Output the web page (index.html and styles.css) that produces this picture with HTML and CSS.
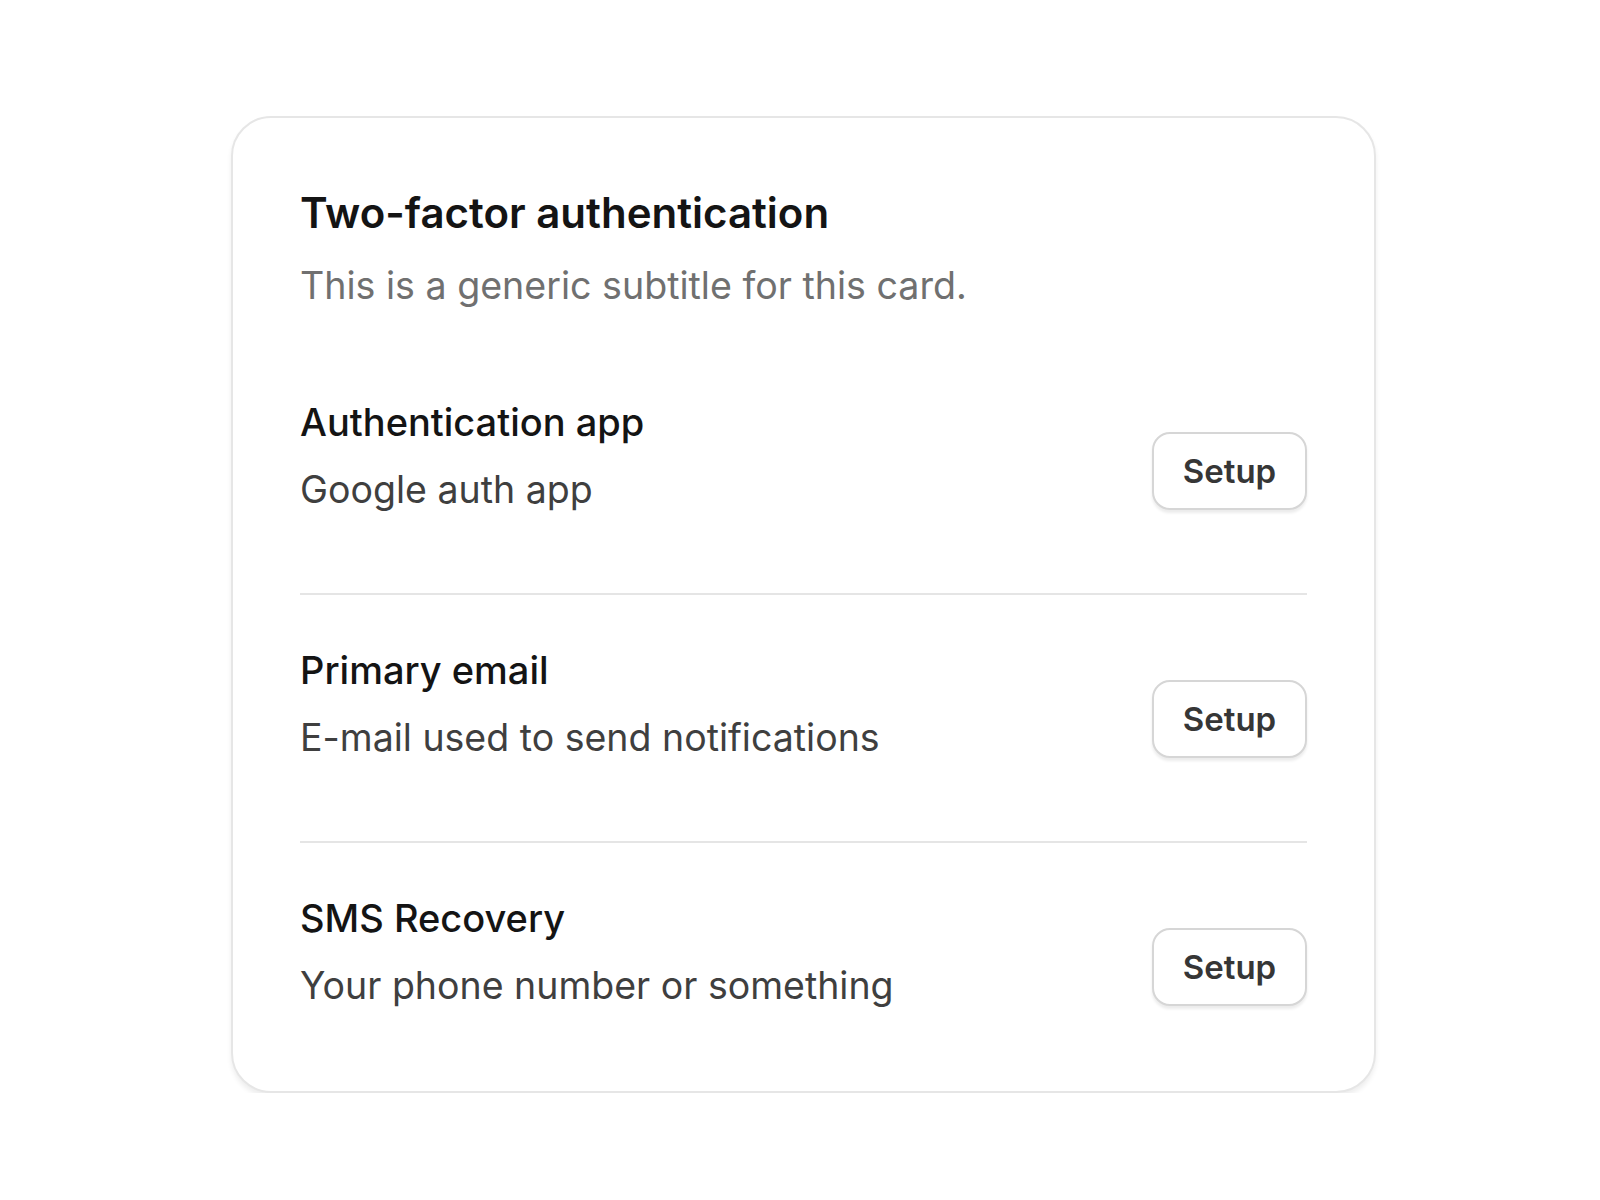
FILE: index.html
```html
<!DOCTYPE html>
<html lang="en">
<head>
<meta charset="UTF-8">
<meta name="viewport" content="width=device-width, initial-scale=1.0">
<title>Two-factor authentication</title>
<link rel="stylesheet" href="styles.css">
</head>
<body>
<div class="page">
<div class="card">
<div class="card-header">
<h1>Two-factor authentication</h1>
<p class="subtitle">This is a generic subtitle for this card.</p>
</div>

<div class="method">
<div class="method-text">
<h2>Authentication app</h2>
<p>Google auth app</p>
</div>
<button class="setup">Setup</button>
</div>

<div class="method">
<div class="method-text">
<h2>Primary email</h2>
<p>E-mail used to send notifications</p>
</div>
<button class="setup">Setup</button>
</div>

<div class="method">
<div class="method-text">
<h2>SMS Recovery</h2>
<p>Your phone number or something</p>
</div>
<button class="setup">Setup</button>
</div>
</div>
</div>
</body>
</html>
```

FILE: styles.css
```css
body {
margin: 0;
background-color: #fff;
font-family: Inter, "Noto Sans", sans-serif;
}
.page {
padding: 116px 0 0 231px;
}
.card {
width: 1145px;
box-sizing: border-box;
background-color: #fff;
border: 2px solid #e6e6e6;
border-radius: 40px;
padding: 70px 67px 2px;
box-shadow: 0 4px 5px rgba(0,0,0,0.07);
}
h1 {
margin: 0;
font-size: 42px;
line-height: 50px;
font-weight: 600;
color: #141414;
}
.subtitle {
margin: 25px 0 90px;
font-size: 37.6px;
line-height: 46px;
color: #707070;
}
.method {
display: flex;
align-items: center;
justify-content: space-between;
padding: 52px 0 50px;
border-bottom: 2px solid #e5e5e5;
}
.method:nth-child(2) {
padding-top: 0;
}
.method:last-child {
border-bottom: none;
}
.method-text {
margin-bottom: 30px;
}
.method-text h2 {
margin: 0 0 22px;
font-size: 38px;
line-height: 46px;
font-weight: 500;
color: #141414;
}
.method-text p {
margin: 0;
font-size: 37.5px;
line-height: 46px;
color: #3f3f3f;
}
.setup {
width: 155px;
height: 78px;
background-color: #fff;
border: 2px solid #d6d6d6;
border-radius: 18px;
box-shadow: 0 3px 3px rgba(0,0,0,0.08);
font-family: Inter, "Noto Sans", sans-serif;
font-size: 33px;
font-weight: 600;
color: #363636;
cursor: pointer;
}
```
